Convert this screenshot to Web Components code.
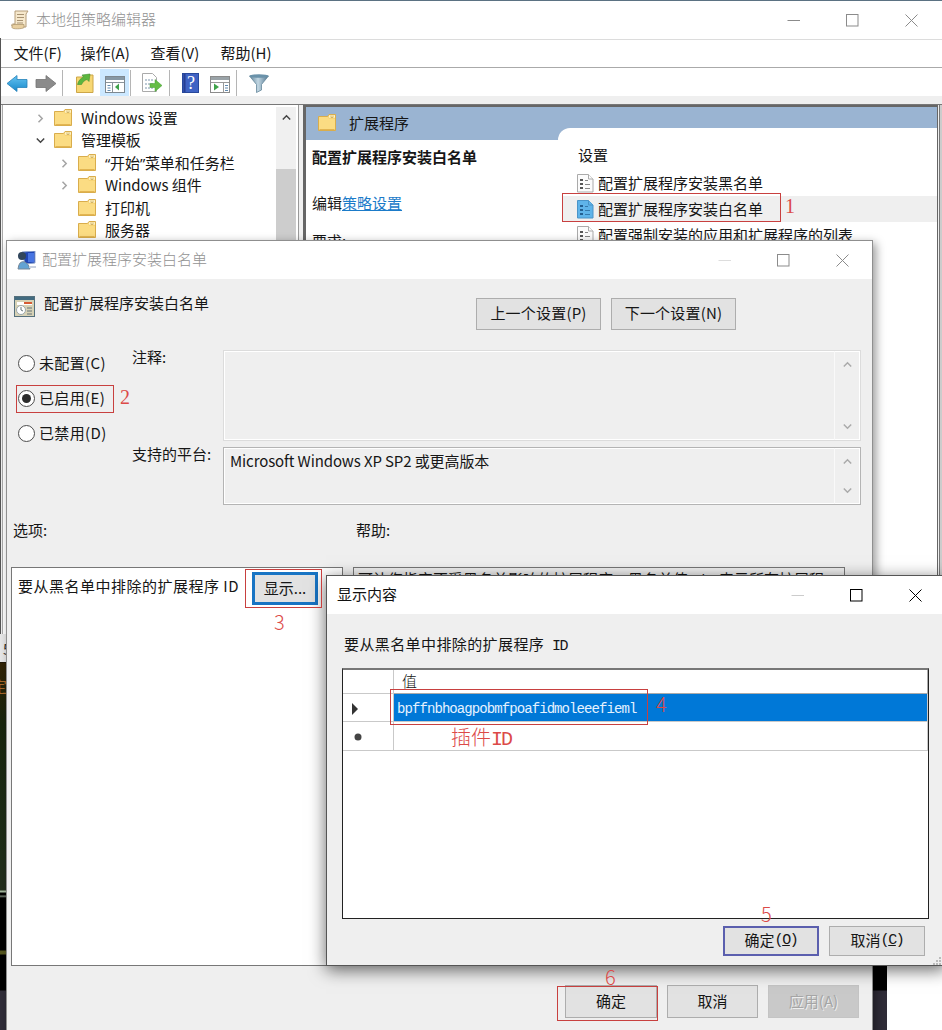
<!DOCTYPE html>
<html lang="zh-CN"><head><meta charset="utf-8"><title>本地组策略编辑器</title>
<style>
html,body{margin:0;width:942px;height:1030px;overflow:hidden;background:#fff}
body{font:15px/22px "Noto Sans CJK SC","Noto Sans",sans-serif;color:#161616}
</style></head><body>
<desk-top></desk-top>
<script>
const define=(name,html,setup)=>{
  customElements.define(name,class extends HTMLElement{
    constructor(){super();this.attachShadow({mode:'open'}).innerHTML=html;}
    connectedCallback(){if(setup)setup(this,this.shadowRoot);}
  });
};

define('folder-icon',`<style>:host{display:block;width:18px;height:17px;flex:none}svg{display:block}</style>
<svg width="18" height="17" viewBox="0 0 18 17"><path d="M.5 2.500h9l1.500-2h6.500v16H.5z" fill="#f6d374" stroke="#d9ad4c"/><path d="M1 3h9l1 2h6v11H1z" fill="#fbdc83"/><path d="M11 1.200h6v2.500h-6z" fill="#fff3c6"/><path d="M13 1.500v2h2v-2" fill="none" stroke="#c9a95c" stroke-width=".8"/><path d="M1.500 15.500h15" stroke="#e3b551"/></svg>`);

const sheet=(fill,stroke,dark)=>`<svg width="17" height="19" viewBox="0 0 17 19"><path d="M.5.500h11l4.500 4.500v13H.5z" fill="${fill}" stroke="${stroke}"/><path d="M11.500.500v4.500h4.500" fill="${fill}" stroke="${stroke}"/><g fill="${dark}"><rect x="3" y="5" width="3" height="2"/><rect x="3" y="9" width="3" height="2"/><rect x="3" y="13" width="3" height="2"/></g><path d="M8 6.500h3M8 10.500h5M8 14.500h5" stroke="${dark}" stroke-opacity=".7"/></svg>`;
define('sheet-icon',`<style>:host{display:block;flex:none;width:17px;height:19px}svg{display:block}</style><span></span>`,(h,r)=>{
  r.querySelector('span').innerHTML=h.hasAttribute('active')?sheet('#5fb4ea','#4a94c8','#235f91'):sheet('#fbfbfb','#aaa','#555');
});

define('window-controls',`<style>:host{display:flex;color:#8b8b8b;padding-right:var(--controls-right,24px)}svg{display:block}svg+svg{margin-left:46px}.min{color:var(--min-color,currentColor)}path,rect{fill:none;stroke:currentColor}</style>
<svg class="min" width="13" height="13"><path d="M.5 6.500h12.500"/></svg><svg width="13" height="13"><rect x=".5" y=".5" width="11.500" height="11.500"/></svg><svg width="13" height="13"><path d="M.5.500l12 12M12.500.500l-12 12"/></svg>`);

define('title-bar',`<style>:host{display:flex;align-items:center;background:#fff;color:#929292;font-weight:300;box-sizing:border-box}span{flex:1;white-space:nowrap;padding-bottom:2px}</style><slot name="icon"></slot><span><slot></slot></span><slot name="controls"></slot>`);

define('push-button',`<style>:host{display:flex;align-items:center;justify-content:center;box-sizing:border-box;background:#e2e2e2;border:1px solid #adadad;white-space:nowrap;flex:none;line-height:20px;padding-bottom:2px}
:host([focused]){border:3px solid #1874c4}:host([disabled]){background:#c9c9c9;border-color:#c4c4c4;color:#a5a5a5;text-shadow:1px 1px #eee}</style><slot></slot>`);

define('radio-option',`<style>:host{display:flex;align-items:center;height:35px;white-space:nowrap;gap:4px}i{box-sizing:border-box;width:17px;height:17px;border:1.500px solid #4d4d4d;border-radius:50%;background:#fff;display:grid;place-items:center}
:host([checked]) i::after{content:"";width:9px;height:9px;border-radius:50%;background:#2b2b2b}span{letter-spacing:.35px;padding-bottom:2px}</style><i></i><span><slot></slot></span>`);

define('chev-icon',`<style>:host{display:block;width:9px;height:9px;color:#aaa}svg{display:block;overflow:visible}:host([dir=down]) svg{transform:rotate(180deg)}:host([dir=right]) svg{transform:rotate(90deg)}</style><svg width="9" height="9"><path d="M.8 6.500L4.500 2.800L8.200 6.500" fill="none" stroke="currentColor" stroke-width="1.500"/></svg>`);

define('scroll-text',`<style>:host{display:grid;grid-template-columns:1fr 26px;box-sizing:border-box;border:1px solid #b4b4b4;box-shadow:inset 0 0 0 1px #fff}.t{padding:2px 6px;letter-spacing:-.11px}.s{border-left:1px solid #f9f9f9;display:flex;flex-direction:column;justify-content:space-between;padding:9px 0 9px 8px}</style><div class="t"><slot></slot></div><div class="s"><chev-icon></chev-icon><chev-icon dir="down"></chev-icon></div>`);

define('tree-row',`<style>:host{display:flex;align-items:center;height:22.500px;padding-left:33px;white-space:nowrap}:host([deep]){padding-left:57px}chev-icon{color:#a4a4a4;margin-right:9px;flex:none}chev-icon[dir=down]{color:#444}.none{visibility:hidden}folder-icon{margin:-2px 9px 0 0}span{letter-spacing:-.05px;margin-top:-1px}</style><chev-icon></chev-icon><folder-icon></folder-icon><span><slot></slot></span>`,(h,r)=>{
  const c=r.querySelector('chev-icon'),s=h.getAttribute('state');
  if(s)c.setAttribute('dir',s);else c.className='none';
});

// Numbered callouts drawn over the windows.
define('mark-box',`<style>:host{position:absolute;box-sizing:border-box;border:1px solid #c8403f;z-index:5}</style>`);
define('mark-text',`<style>:host{position:absolute;color:#dc4a48;font:300 20px/22px "Noto Sans CJK SC",sans-serif;z-index:5;white-space:nowrap}</style><slot></slot>`);

define('tool-bar',`<style>:host{display:block;height:27px}svg{display:block}</style>
<svg width="300" height="27" viewBox="0 0 300 27">
<defs><linearGradient id="b" x2="0" y2="1"><stop stop-color="#66c4f2"/><stop offset="1" stop-color="#1688ca"/></linearGradient><linearGradient id="f" x2="1"><stop stop-color="#5f8298"/><stop offset=".45" stop-color="#c2d7e3"/><stop offset="1" stop-color="#50748d"/></linearGradient></defs>
<path d="M7 14.500l10-8v4h10v8H17v4z" fill="url(#b)" stroke="#2682b9" stroke-width=".8"/>
<path d="M56 14.500l-10-8v4H36v8h10v4z" fill="#8b8b8b" stroke="#737373" stroke-width=".8"/>
<path d="M62.500 1v26M130.500 1v26M169.500 1v26M236.500 1v26" stroke="#b5b5b5"/>
<path d="M76.500 8h9l2-2h5.500v17.500H76.500z" fill="#f7d773" stroke="#cda648"/><path d="M77.500 15.500c1-4 3-6 6-7.500l-1.500-2 8-1-1 7.500-2-2c-3 1-4 2.500-5.500 5z" fill="#5cb63e" stroke="#3e9132" stroke-width=".6"/>
<rect x="100" y="0" width="29" height="27" fill="#cce8ff"/>
<rect x="105.500" y="7.500" width="19" height="16" fill="#fff" stroke="#7e8890"/><rect x="106" y="8" width="18" height="3" fill="#8798a5"/><path d="M106 13.500h18" stroke="#8b949a"/><path d="M112.500 14v9" stroke="#8b949a"/><path d="M107.500 16.500h3M107.500 19h3M107.500 21.500h3" stroke="#6189ae"/>
<path d="M119 14.500v7l-4-3.500z" fill="#3fa34a"/>
<path d="M142.500 4.500h10l4 4v14h-14z" fill="#fff" stroke="#aaa"/><path d="M145 11h8M145 15h8M145 19h8" stroke="#7d96ad" stroke-dasharray="2 1"/><path d="M150 14.500h5v-4l7 6-7 6v-4h-5z" fill="#65bd45" stroke="#409c33" stroke-width=".5"/>
<rect x="182.500" y="4.500" width="16" height="19" fill="#3f63c4" stroke="#28489b"/><path d="M184.500 5v18" stroke="#273f93" stroke-width="2"/><text x="187" y="20" fill="#fff" font-family="Liberation Serif" font-size="18">?</text>
<rect x="210.500" y="7.500" width="19" height="16" fill="#fff" stroke="#8b8b8b"/><rect x="211" y="8" width="18" height="3" fill="#9aa3a8"/><path d="M211 13.500h18M223.500 14v9" stroke="#999"/><path d="M214 14.500v7l5-3.500z" fill="#3fa34a"/><path d="M225 16.500h3M225 19h3M225 21.500h3" stroke="#6189ae"/>
<path d="M249.500 7l7 8.500v8l5-2.500v-5.500l7-8.500z" fill="url(#f)" stroke="#66889c" stroke-width=".8"/><ellipse cx="259" cy="7" rx="9.500" ry="1.800" fill="#6a92aa"/>
</svg>`);

define('policy-window',`<style>
:host{display:block;background:#fff;border-top:1px solid #5b7283;box-sizing:border-box}
title-bar{height:39px;padding-left:11px;border-bottom:1px solid #dcdcdc}
title-bar svg{margin-right:7px}
.menu{display:grid;grid-template-columns:67px 70px 70px 70px;height:27px;padding-left:13.500px;border-bottom:1px solid #aaa;line-height:25px}
tool-bar{margin-top:1px}
.band{height:8px;background:#efefef;border-bottom:1px solid #777}
.body{display:grid;grid-template-columns:299px 1fr;background:#f0f0f0;gap:4px;height:530px;padding:0 4px 0 0}
.tree{display:grid;grid-template-columns:1fr 20px;background:#fff;margin-left:2px;padding-right:2px;border-right:1px solid #999;padding-top:2px;border-left:1px solid #aaa}
.tree q{quotes:none;font-family:"Open Sans";display:inline-block;width:5px}
.bar{background:#f0f0f0;display:flex;flex-direction:column;align-items:center;color:#444}
.bar chev-icon{margin:6px 0 47px;color:#444}.bar i{width:100%;flex:1;background:#cdcdcd}
.list{background:#fff;border:solid #666;border-width:2px 1px 0 3px;overflow:hidden}
.top{height:33px;display:grid;grid-template-columns:252px 1fr;background:#9ab4d2}
.top div{display:flex;align-items:center;padding:0 0 2px 12px;gap:13px}.top folder-icon{margin-top:-1px}
.top b{margin-top:21px;height:12px;background:#fff;border-radius:14px 0 0 0}
.cols{display:grid;grid-template-columns:256px 1fr}
.info{padding:6px 0 0 6px}.info h4{margin:0;font-size:15px;line-height:22px}.info p{margin:24px 0 16px}.info a{color:#1b7bc9;text-decoration:underline}
.set{padding-top:4px}.set p{margin:0 0 4px 16px}.row{height:26px;display:flex;align-items:center;gap:4px;padding-left:15px;white-space:nowrap}.row.on{background:#efefef}
</style>
<title-bar><svg slot="icon" width="18" height="20"><path d="M4 1h13l-2 3v13H3c-3 0-3-3-1-3h2z" fill="#f6e8cc" stroke="#b49c78"/><path d="M6 4.500h7M6 7.500h7M6 10.500h6M6 13h6" stroke="#a79272"/><path d="M1 17.500c0 2 11 1.500 12 0v-3H3c-2 0-2 2-2 3z" fill="#e8cfa0" stroke="#a98f65" stroke-width=".7"/></svg>本地组策略编辑器<window-controls slot="controls"></window-controls></title-bar>
<div class="menu"><span>文件(F)</span><span>操作(A)</span><span>查看(V)</span><span>帮助(H)</span></div>
<tool-bar></tool-bar><div class="band"></div>
<div class="body"><div class="tree"><div><tree-row state="right">Windows 设置</tree-row><tree-row state="down">管理模板</tree-row><tree-row deep state="right"><q>“</q>开始<q>”</q>菜单和任务栏</tree-row><tree-row deep state="right">Windows 组件</tree-row><tree-row deep>打印机</tree-row><tree-row deep>服务器</tree-row></div><div class="bar"><chev-icon></chev-icon><i></i></div></div>
<div class="list"><div class="top"><div><folder-icon></folder-icon>扩展程序</div><b></b></div>
<div class="cols"><div class="info"><h4>配置扩展程序安装白名单</h4><p>编辑<a>策略设置</a></p><span>要求:</span></div>
<div class="set"><p>设置</p><div class="row"><sheet-icon></sheet-icon>配置扩展程序安装黑名单</div><div class="row on"><sheet-icon active></sheet-icon>配置扩展程序安装白名单</div><div class="row"><sheet-icon></sheet-icon>配置强制安装的应用和扩展程序的列表</div></div></div></div></div>`);

define('setting-dialog',`<style>
:host{display:block;background:#efefef;border:1px solid #8f8f8f;box-sizing:border-box;box-shadow:3px 3px 9px #0006;--min-color:#ddd;--controls-right:23px}
title-bar{height:38px;padding-left:10px}title-bar svg{margin-right:5px}
.head{display:flex;padding:15px 0 0 7px;height:71px;box-sizing:border-box}.head svg{margin-top:2px;flex:none}.head span{margin:-2px 0 0 9px;width:432px;flex:none}
.head push-button{height:32px;margin-top:4px;width:125px;letter-spacing:.2px}.head push-button+push-button{margin-left:10px}
.form{display:grid;grid-template-columns:114px 91px 638px;padding-left:11px;height:155px}
.radios{margin-top:-4px}
.labels div{height:97px}.labels{margin:-4px 0 0}
.boxes{display:grid;grid-template-rows:91px 58px;gap:6px}
.caps{display:grid;grid-template-columns:343px 1fr;padding:14px 0 0 6px;height:46px;box-sizing:border-box}
.panes{display:grid;grid-template-columns:332px 492px;gap:10px;padding-left:4px;margin-top:16px;height:399px}
.pane{background:#fff;border:1px solid #777;box-sizing:border-box;display:flex;align-items:flex-start;padding:4px 6px;white-space:nowrap}
.pane:last-child{background:#efefef;padding:0 4px}.pane push-button{width:66px;height:33px;margin:0 0 0 13px}.pane span{margin-top:3px;width:221px;flex:none;letter-spacing:.5px}
.pane q{quotes:none;font-family:"Open Sans";display:inline-block;width:31px;text-align:center}
.foot{display:flex;gap:10px;padding:19px 0 0 558px}.foot push-button{width:92px;height:33px}.foot push-button+push-button{width:91px}
</style>
<title-bar><svg slot="icon" width="20" height="19"><path d="M5 1l13-1v12l-10 1z" fill="#1f45b3" stroke="#8fa5cf"/><path d="M11 2h6v9h-6z" fill="#4774e2"/><circle cx="5" cy="5" r="4" fill="#31465c"/><path d="M1 18q1-9 7-7 4 2 5 7z" fill="#63a3d3" stroke="#789"/><path d="M12 15h7v2h-7z" fill="#c9d1df"/></svg>配置扩展程序安装白名单<window-controls slot="controls"></window-controls></title-bar>
<div class="head"><svg width="21" height="21"><rect x=".5" y=".5" width="20" height="20" fill="#d7d2b6" stroke="#55707d"/><path d="M1 1h19v3H1z" fill="#426b80"/><path d="M3 6h15v3H3z" fill="#fff"/><path d="M10 6h8v2h-8z" fill="#d65c35"/><circle cx="7" cy="14" r="4.500" fill="#fff" stroke="#9aa7ac"/><path d="M7 11v3l2 1M13 12h5M13 15h5M13 18h5" stroke="#66757b" fill="none"/></svg><span>配置扩展程序安装白名单</span><push-button>上一个设置(P)</push-button><push-button>下一个设置(N)</push-button></div>
<div class="form"><div class="radios"><radio-option>未配置(C)</radio-option><radio-option checked>已启用(E)</radio-option><radio-option>已禁用(D)</radio-option></div><div class="labels"><div>注释:</div><div>支持的平台:</div></div><div class="boxes"><scroll-text style="border-color:#dcdcdc"></scroll-text><scroll-text>Microsoft Windows XP SP2 或更高版本</scroll-text></div></div>
<div class="caps"><span>选项:</span><span>帮助:</span></div>
<div class="panes"><div class="pane"><span>要从黑名单中排除的扩展程序 ID</span><push-button focused>显示...</push-button></div><div class="pane"><div>可让您指定不受黑名单影响的扩展程序。黑名单值<q>“*”</q>表示所有扩展程</div></div></div>
<div class="foot"><push-button>确定</push-button><push-button>取消</push-button><push-button disabled>应用(A)</push-button></div>`);

define('content-dialog',`<style>
:host{display:flex;flex-direction:column;background:#efefef;border:1px solid #555;box-sizing:border-box;box-shadow:0 4px 16px #0009;--min-color:#ccc;--controls-right:23px}
title-bar{height:38px;padding-left:10px;color:#111;font-weight:400;flex:none}window-controls{color:#000}
.label{padding:19px 0 0 17px;height:54px;box-sizing:border-box;white-space:pre;letter-spacing:.4px}
.mono{font-family:"Liberation Mono",monospace;font-size:15px;letter-spacing:-1.400px}.label .mono{margin-left:4px}push-button .mono{margin-top:2px}
.grid{margin-left:15px;width:587px;height:251px;box-sizing:border-box;background:#fff;border:1px solid #222;border-top:2px solid #777;display:grid;grid-template-columns:51px 1fr;grid-template-rows:23.500px 28.500px 28.500px}
.grid>div{border:0 solid #c9c9c9;border-width:0 1px 1px 0;display:flex;align-items:center;box-sizing:border-box;line-height:20px}
.grid .h{border-color:#aaa;padding-left:8px;font-weight:300}.sel{background:#0078d7;color:#e5f2ff;padding-left:3px}.sel span{font:14px/20px "Liberation Mono",monospace;letter-spacing:-.92px;padding-top:4px}.grid>div:nth-child(odd){padding:3px 0 0 8px}
.buttons{display:flex;gap:10px;justify-content:flex-end;padding:7px 20px 0}push-button{width:96px;height:30px}push-button[focused]{border-color:#5b5fae;border-width:2px}
.grip{align-self:flex-end;display:block;margin:1px 4px 0 0;flex:none}
</style>
<title-bar>显示内容<window-controls slot="controls"></window-controls></title-bar>
<div class="label">要从黑名单中排除的扩展程序 <span class="mono">ID</span></div>
<div class="grid"><div></div><div class="h">值</div><div><svg width="8" height="12"><path d="M1 0v12l6-6z" fill="#333"/></svg></div><div class="sel"><span>bpffnbhoagpobmfpoafidmoleeefieml</span></div><div><svg width="12" height="12"><circle cx="7" cy="6" r="3.500" fill="#444"/></svg></div><div></div></div>
<div class="buttons"><push-button focused>确定<span class="mono">(<u>O</u>)</span></push-button><push-button>取消<span class="mono">(<u>C</u>)</span></push-button></div>
<svg class="grip" width="9" height="8"><path d="M7 0h2v2H7zM7 3h2v2H7zM4 3h2v2H4zM1 6h2v2H1zM4 6h2v2H4zM7 6h2v2H7z" fill="#bbb"/></svg>`);

define('desk-top',`<style>
:host{display:block;position:relative;width:942px;height:1030px;overflow:hidden}
policy-window,setting-dialog,content-dialog,.strip,.edge,.status{position:absolute}
policy-window{left:0;top:0;width:942px;height:640px}
setting-dialog{left:6px;top:240px;width:867px;height:810px}
content-dialog{left:326px;top:575px;width:620px;height:391px}
.strip{left:0;top:634px;width:887px;height:396px;overflow:hidden;background:linear-gradient(#0d0c08 28px,#312305 29px,#18250d 90px,#1e2d18 220px,#222d1b 256px,#a5b99f 257px 258px,#000 259px 261px,#7d8a7b 262px,#000 264px 316px,#565720 317px 320px,#000 321px 356px,#302d39 357px)}
.strip span{display:block;margin:41px 0 0 -8px;color:#a8682a}
.edge{left:939px;top:105px;width:3px;height:470px;background:linear-gradient(90deg,#777 1px,#ccc 1px)}
.status{left:0;top:634px;width:6px;height:28px;overflow:hidden;background:#e8e8e8;color:#333;padding:4px 0 0 3px;box-sizing:border-box}
.side{position:absolute;left:0;top:38px;width:1px;height:596px;background:#555}
</style>
<policy-window></policy-window><div class="strip"><span>定</span></div><div class="status">5</div><div class="edge"></div><div class="side"></div>
<setting-dialog></setting-dialog><content-dialog></content-dialog>
<mark-box style="left:562px;top:193px;width:219px;height:29px"></mark-box><mark-text style="left:785px;top:195px;font-family:'Liberation Serif'">1</mark-text>
<mark-box style="left:16px;top:385px;width:98px;height:28px"></mark-box><mark-text style="left:120px;top:386px;font-family:'Liberation Serif'">2</mark-text>
<mark-box style="left:245px;top:569px;width:77px;height:39px"></mark-box><mark-text style="left:274px;top:611px">3</mark-text>
<mark-box style="left:390px;top:689px;width:258px;height:36px"></mark-box><mark-text style="left:656px;top:693px">4</mark-text><mark-text style="left:451px;top:726px">插件<span style="font:20px/20px 'Liberation Mono';letter-spacing:-2px">ID</span></mark-text>
<mark-text style="left:761px;top:903px">5</mark-text>
<mark-box style="left:557px;top:986px;width:101px;height:35px"></mark-box><mark-text style="left:605px;top:966px">6</mark-text>`);
</script></body></html>
